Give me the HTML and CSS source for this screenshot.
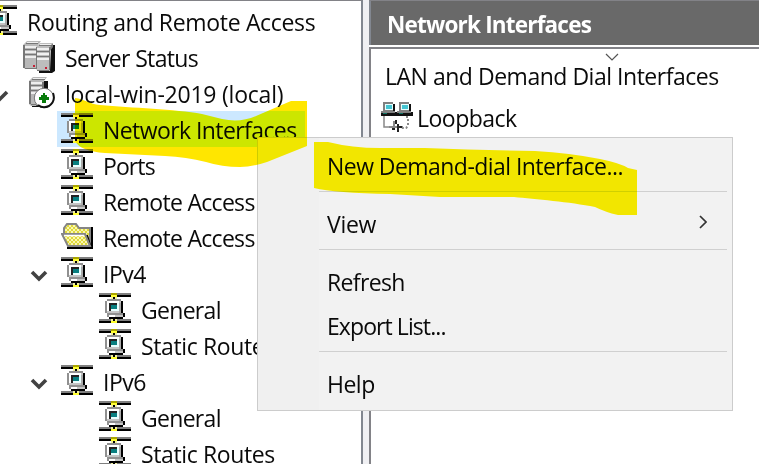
FILE: index.html
```html
<!DOCTYPE html>
<html lang="en">
<head>
<meta charset="utf-8">
<title>Routing and Remote Access</title>
<link rel="stylesheet" href="styles.css">
</head>
<body>
<svg class="defs" width="0" height="0" aria-hidden="true">
  <symbol id="net" viewBox="0 0 16 15">
    <path fill="#808080" d="M0 0h16v1H0zM0 13h16v1H0z"/>
    <path fill="#000" d="M0 1h16v1H0zM0 14h16v1H0zM7 2h1v1H7zM11 4h1v6h-1zM12 10h1v2h-1zM5 12h7v1H5zM7 13h1v1H7z"/>
    <path fill="#aaa500" d="M6 0h3v1H6z"/>
    <path fill="#ffff30" d="M6 1h3v1H6zM6 14h3v1H6z"/>
    <path fill="#f2f0a0" d="M6 2h1v1H6zM8 2h1v1H8zM6 13h1v1H6zM8 13h1v1H8z"/>
    <path fill="#909090" d="M4 3h7v1H4zM3 4h1v6H3zM4 10h8v1H4zM4 11h1v1H4z"/>
    <path fill="#c4c4c4" d="M4 4h7v6H4zM5 11h7v1H5z"/>
    <path fill="#fff" d="M4 4h6v1H4zM4 5h1v4H4zM5 11h3v1H5z"/>
    <path fill="#222" d="M5 5h4v1H5zM5 6h1v3H5z"/>
    <path class="screen" d="M6 6h3v2H6z"/>
    <path fill="#e9ffff" d="M9 5h1v4H9zM6 8h3v1H6z"/>
    <path fill="#aaa" d="M10 5h1v5h-1z"/>
  </symbol>
  <symbol id="servers" viewBox="0 0 32 32">
    <path fill="#111" d="M11 3h3v23H5v-2h6zM28 4h4v26l-3 2H16v-2h11z"/>
    <path fill="#b8b8b8" d="M0 4l4-4h14l-3 4v24H2l-2-2z"/>
    <path fill="#eee" d="M2 5h12v2H2zM2 10h11v2H2zM2 15h11v2H2zM4 1h11v1H4z"/>
    <path fill="#777" d="M0 4h2v23H0zM2 8h12v1H2zM2 13h12v1H2zM3 2h12v1H3zM2 27h12v1H2z"/>
    <path fill="#bdbdbd" d="M13 6l4-4h13l-3 4v24H15l-2-2z"/>
    <path fill="#f0f0f0" d="M14 7h12v2H14zM14 12h12v2H14zM14 17h12v2H14zM17 3h11v1H17z"/>
    <path fill="#777" d="M13 6h1v22h-1zM14 10h13v1H14zM14 15h13v1H14zM16 4h12v1H16zM14 29h12v1H14zM26 6h1v23h-1zM27 6l3-4v4l-3 4z"/>
    <path fill="#c51f35" d="M10 24h2v2h-2zM22 26h2v2h-2z"/>
  </symbol>
  <symbol id="host" viewBox="0 0 28 32">
    <path fill="#111" d="M16 4h4v18h-6zM4 28h8v2H4z"/>
    <path fill="#b8b8b8" d="M1 4l4-4h14l-3 4v16L8 29H3l-2-2z"/>
    <path fill="#eee" d="M3 5h12v2H3zM3 10h11v2H3zM3 15h9v2H3zM5 1h12v1H5z"/>
    <path fill="#777" d="M1 4h2v23H1zM3 8h12v1H3zM3 13h12v1H3zM4 2h13v1H4zM3 27h5v1H3zM14 5h2v7h-2z"/>
    <circle cx="16" cy="21" r="9.7" fill="#fff" stroke="#777" stroke-width="1"/>
    <path d="M25 16q3 8-4 13-6 3-11-1" fill="none" stroke="#111" stroke-width="2"/>
    <path fill="#087b0b" d="M15 16h2v2h2v2h2v3h-3v3h-4v-3h-3v-3h2v-2h2z"/>
  </symbol>
  <pattern id="weave" width="4" height="4" patternUnits="userSpaceOnUse">
    <path fill="#faf7b0" d="M0 0h4v4H0z"/><path fill="#dfd83c" d="M0 0h2v2H0zM2 2h2v2H2z"/>
  </pattern>
  <symbol id="folder" viewBox="0 0 32 26">
    <path fill="#000" d="M28 4h4v22H6v-2h22z"/>
    <path fill="url(#weave)" stroke="#858585" stroke-width="2" d="M3 11V5l3-4h9l3 4h11v19"/>
    <path fill="#000" d="M25 12h2l3 10h-3z"/>
    <path fill="url(#weave)" stroke="#858585" stroke-width="2" d="M1 11h23l5 12H7z"/>
    <path fill="none" stroke="#fff" stroke-width="1.5" d="M3 12.5h20"/>
  </symbol>
  <symbol id="adapter" viewBox="0 0 32 32">
    <path fill="#111" d="M0 10h32v4H0zM12 2h2v8h-2zM28 2h2v8h-2z"/>
    <path fill="#808080" d="M2 0h10v10H2zM18 0h10v10H18zM0 9h14v2H0zM16 9h14v2H16z"/>
    <path fill="#e6ffff" d="M4 2h8v6H4zM20 2h8v6H20z"/>
    <path fill="#45c5d2" d="M5 3h6v4H5zM21 3h6v4H21z"/>
    <path fill="#0e7162" d="M2 11h4v1H2zM18 11h4v1H18z"/>
    <path fill="none" stroke="#888" stroke-width="1.5" d="M3 14v11h7"/>
    <path fill="none" stroke="#888" stroke-width="2" stroke-dasharray="2 2" d="M25 15h2v9l-2 2h-5"/>
    <path fill="#888" d="M8 24h14v2H8zM12 19h2v9h-2z"/>
    <path fill="#222" d="M14 18h2v4h-2zM16 22h2v8h-2zM18 24h3v2h-3zM11 26h3v2h-3z"/>
  </symbol>
</svg>

<main class="window">
  <section class="tree">
    <div class="row root"><svg class="net"><use href="#net"/></svg><span class="t-root">Routing and Remote Access</span></div>
    <div class="row status"><svg class="servers"><use href="#servers"/></svg><span class="t-status">Server Status</span></div>
    <div class="row server"><svg class="chevron" viewBox="0 0 18 12"><path d="M2 2l7 7 7-7"/></svg><svg class="host"><use href="#host"/></svg><span class="t-host">local-win-2019 (local)</span></div>
    <div class="row l1 selected"><svg class="net"><use href="#net"/></svg><span class="t-net">Network Interfaces</span></div>
    <div class="row l1"><svg class="net"><use href="#net"/></svg><span class="t-ports">Ports</span></div>
    <div class="row l1"><svg class="net"><use href="#net"/></svg><span class="t-remote">Remote Access</span></div>
    <div class="row l1"><svg class="folder"><use href="#folder"/></svg><span class="t-remote">Remote Access</span></div>
    <div class="row group"><svg class="chevron" viewBox="0 0 18 12"><path d="M2 2l7 7 7-7"/></svg><svg class="net"><use href="#net"/></svg><span class="t-ip">IPv4</span></div>
    <div class="row l2"><svg class="net"><use href="#net"/></svg><span class="t-general">General</span></div>
    <div class="row l2"><svg class="net"><use href="#net"/></svg><span class="t-static">Static Routes</span></div>
    <div class="row group"><svg class="chevron" viewBox="0 0 18 12"><path d="M2 2l7 7 7-7"/></svg><svg class="net"><use href="#net"/></svg><span class="t-ip">IPv6</span></div>
    <div class="row l2"><svg class="net"><use href="#net"/></svg><span class="t-general">General</span></div>
    <div class="row l2"><svg class="net"><use href="#net"/></svg><span class="t-static">Static Routes</span></div>
  </section>
  <section class="details">
    <h1><span class="t-title">Network Interfaces</span></h1>
    <div class="list">
      <svg class="sort" viewBox="0 0 14 8"><path d="M1 1l6 6 6-6"/></svg>
      <div class="column"><span class="t-column">LAN and Demand Dial Interfaces</span></div>
      <div class="entry"><svg class="adapter"><use href="#adapter"/></svg><span class="t-loop">Loopback</span></div>
    </div>
  </section>
</main>

<nav class="menu">
  <div class="item"><span class="t-new">New Demand-dial Interface...</span></div>
  <div class="sep"></div>
  <div class="item"><span class="t-view">View</span><svg class="arrow" viewBox="0 0 8 14"><path d="M1 1l6 6-6 6"/></svg></div>
  <div class="sep"></div>
  <div class="item"><span class="t-refresh">Refresh</span></div>
  <div class="item"><span class="t-export">Export List...</span></div>
  <div class="sep"></div>
  <div class="item"><span class="t-help">Help</span></div>
</nav>

<svg class="marker" viewBox="0 0 759 464">
  <path d="M75 98C85 99 89 104 100 105C132 108 175 109 202 114L222 119Q240 123 256 116L291 101H307V146L267 162Q252 167 240 167Q222 167 206 162Q186 157 165 156L105 153Q80 151 75 141Z"/>
  <path d="M314 142H328Q352 148 380 148H425Q480 150 535 151Q570 153 600 159Q620 163 628 168L637 170V215H618Q605 212 595 207C570 202 535 199 514 197H440L390 194Q335 193 314 188Z"/>
</svg>
</body>
</html>
```
FILE: styles.css
```css
* { box-sizing: border-box; }
body {
  margin: 0;
  width: 759px;
  height: 464px;
  overflow: hidden;
  position: relative;
  background: #fff;
  color: #0a0a0a;
  font: 23px/36px "Open Sans", "Noto Sans", sans-serif;
}
svg { display: block; flex: none; }
span { white-space: nowrap; }
.defs { position: absolute; }
.window {
  display: grid;
  grid-template-columns: 363px 390px;
  column-gap: 6px;
  height: 464px;
  background: #f0f0f3;
}
.tree {
  background: #fff;
  border-top: 1px solid #828287;
  border-right: 2px solid #828790;
  overflow: hidden;
  padding-top: 2px;
}
.row { display: flex; align-items: center; height: 36px; }
.row span { padding-top: 2px; }
.net { width: 32px; height: 30px; margin-top: -2px; shape-rendering: crispEdges; }
.screen { fill: #087f80; }
.selected .screen { fill: #087f20; }
.root { margin-left: -15px; gap: 10px; }
.status { padding-left: 23px; gap: 10px; }
.servers { width: 32px; height: 32px; }
.server { margin-left: -9px; }
.server .chevron { margin-right: 19px; }
.host { width: 28px; height: 32px; margin-right: 9px; }
.l1 { padding-left: 61px; gap: 10px; }
.selected { margin-left: 57px; width: 248px; padding-left: 4px; background: #cce8ff; }
.folder { width: 32px; height: 26px; margin-top: -2px; }
.group { padding-left: 30px; }
.group .net { margin: -2px 10px 0 13px; }
.chevron { width: 18px; height: 12px; margin-top: 6px; fill: none; stroke: #424242; stroke-width: 3.6; }
.l2 { padding-left: 99px; gap: 10px; }

/* per-label tracking */
.t-root { letter-spacing: -.32px; }
.t-status { letter-spacing: -.65px; }
.t-host { letter-spacing: -.22px; }
.t-net { letter-spacing: -.58px; }
.t-ports { letter-spacing: -.9px; }
.t-remote { letter-spacing: -.7px; }
.t-ip { letter-spacing: -.5px; }
.t-general { letter-spacing: -.7px; }
.t-static { letter-spacing: -.38px; }
.t-title { letter-spacing: -.8px; }
.t-column { letter-spacing: -.48px; }
.t-loop { letter-spacing: -.5px; }
.t-new { letter-spacing: -.55px; }
.t-view { letter-spacing: -.3px; }
.t-refresh { letter-spacing: -.65px; }
.t-export { letter-spacing: -.92px; }
.t-help { letter-spacing: -.5px; }

.details {
  border-top: 1px solid #828287;
  display: flex;
  flex-direction: column;
}
h1 {
  margin: 0;
  height: 44px;
  padding: 6px 0 0 16px;
  border-left: 2px solid #828790;
  background: #696969;
  color: #fff;
  font-size: 22.5px;
  line-height: 36px;
}
.list {
  flex: 1;
  background: #fff;
  border: solid #828287;
  border-width: 2px 0 0 2px;
  box-shadow: 0 -2px #fff;
  margin-top: 2px;
  padding-top: 4px;
}
.sort { width: 14px; height: 8px; margin-left: 234px; fill: none; stroke: #555; stroke-width: 1.2; }
.column { height: 36px; padding-left: 14px; margin-top: -3px; }
.entry { display: flex; align-items: center; height: 36px; margin-top: 6px; padding-left: 10px; gap: 4px; }
.adapter { width: 32px; height: 32px; }
.menu {
  position: absolute;
  left: 257px;
  top: 137px;
  width: 476px;
  height: 274px;
  padding: 6px 5px 0 0;
  border: 1px solid #ccc;
  background: linear-gradient(to right, #f0f0f0 61px, #f2f2f2 61px);
}
.item { display: flex; align-items: center; justify-content: space-between; height: 44px; padding: 0 20px 0 69px; }
.sep { height: 14px; margin-left: 61px; padding-top: 3px; }
.sep::before { content: ""; display: block; height: 1px; background: #d0d0d0; }
.arrow { width: 8px; height: 14px; margin-top: -4px; fill: none; stroke: #333; stroke-width: 1.7; }
.marker {
  position: absolute;
  left: 0;
  top: 0;
  width: 759px;
  height: 464px;
  fill: #ffe600;
  mix-blend-mode: darken;
}
```
